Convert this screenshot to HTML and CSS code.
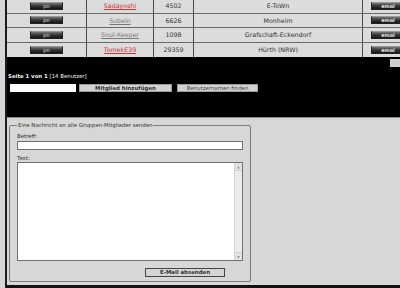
FILE: index.html
```html
<!DOCTYPE html>
<html lang="de">
<head>
    <meta charset="UTF-8">
    <title>Gruppen-Mitglieder</title>
    <link rel="stylesheet" href="styles.css">
</head>
<body>
    <div class="page">
        <!-- Mitgliederliste -->
        <table class="members">
            <tr>
                <td class="c-pm"><span class="dark-btn">pn</span></td>
                <td class="c-name"><a class="user user-red" href="#">Sadayoshi</a></td>
                <td class="c-posts">4502</td>
                <td class="c-city">E-ToWn</td>
                <td class="c-mail"><span class="dark-btn mail-btn">emal</span></td>
            </tr>
            <tr>
                <td class="c-pm"><span class="dark-btn">pn</span></td>
                <td class="c-name"><a class="user" href="#">Sobeln</a></td>
                <td class="c-posts">6626</td>
                <td class="c-city">Monheim</td>
                <td class="c-mail"><span class="dark-btn mail-btn">emal</span></td>
            </tr>
            <tr>
                <td class="c-pm"><span class="dark-btn">pn</span></td>
                <td class="c-name"><a class="user" href="#">Soul-Keeper</a></td>
                <td class="c-posts">1098</td>
                <td class="c-city">Grafschaft-Eckendorf</td>
                <td class="c-mail"><span class="dark-btn mail-btn">emal</span></td>
            </tr>
            <tr>
                <td class="c-pm"><span class="dark-btn">pn</span></td>
                <td class="c-name"><a class="user user-red" href="#">TomekE39</a></td>
                <td class="c-posts">29359</td>
                <td class="c-city">Hürth (NRW)</td>
                <td class="c-mail"><span class="dark-btn mail-btn">emal</span></td>
            </tr>
        </table>

        <!-- Seitenleiste / Mitglied hinzufügen -->
        <div class="pager">
            <div class="pager-top"><span class="jump-box"></span></div>
            <p class="count"><b>Seite 1 von 1</b> [14 Benutzer]</p>
            <div class="add-form">
                <input type="text" class="add-input">
                <button class="light-btn strong">Mitglied hinzufügen</button>
                <button class="light-btn find">Benutzernamen finden</button>
            </div>
        </div>

        <!-- Rundmail -->
        <div class="mail-area">
            <fieldset class="mail">
                <legend>Eine Nachricht an alle Gruppen-Mitglieder senden</legend>
                <label class="field-label">Betreff:</label>
                <input type="text" class="subject">
                <label class="field-label text-label">Text:</label>
                <div class="message-box">
                    <textarea class="message"></textarea>
                    <div class="scrollbar">
                        <span class="scroll-arrow">▲</span>
                        <span class="scroll-arrow">▼</span>
                    </div>
                </div>
                <div class="submit-row">
                    <button class="send-btn">E-Mail absenden</button>
                </div>
            </fieldset>
        </div>
        <div class="bottom-bar"></div>
    </div>
</body>
</html>
```

FILE: styles.css
```css
* {
    box-sizing: border-box;
    margin: 0;
    padding: 0;
}

html, body {
    overflow: hidden;
}

body {
    background: #d5d5d5;
    font-family: 'DejaVu Sans', Verdana, sans-serif;
    color: #333;
    height: 288px;
}

.page {
    margin-left: 5px;
    width: 408px;
    border-left: 2px solid #1c1c1c;
    height: 100%;
    display: flex;
    flex-direction: column;
}

/* Mitgliederliste */
.members {
    margin-top: -1px;
    width: 406px;
    table-layout: fixed;
    border-collapse: separate;
    border-spacing: 0;
    background: #dcdcdc;
    font-size: 6.3px;
}

.members td {
    height: 14.5px;
    border-bottom: 1px solid #6a6a6a;
    border-right: 1px solid #4a4a4a;
    text-align: center;
    vertical-align: middle;
    color: #333;
}

.members tr:last-child td {
    border-bottom: none;
}

.c-pm { width: 80px; }
.c-name { width: 67px; }
.c-posts { width: 40px; }
.c-city { width: 169px; }
.members td.c-mail {
    width: 50px;
    border-right: none;
}

.dark-btn {
    display: inline-block;
    width: 33px;
    height: 8px;
    line-height: 7px;
    font-size: 5px;
    color: #e0e0e0;
    background: linear-gradient(#777, #3a3a3a 45%, #151515);
    border: 1px solid #222;
    border-top-color: #999;
    vertical-align: middle;
}

.mail-btn {
    width: 34px;
    font-weight: bold;
}

.user {
    color: #7a7a7a;
    text-decoration: underline;
}

.user-red {
    color: #cc3333;
}

/* Seitenleiste */
.pager {
    background: #000;
    height: 60px;
    padding-top: 2px;
    flex: none;
}

.pager-top {
    display: flex;
    justify-content: flex-end;
    height: 8px;
}

.jump-box {
    width: 10px;
    height: 8px;
    margin-right: 13px;
    background: #cfcfcf;
}

.count {
    margin-top: 5px;
    padding-left: 1px;
    font-size: 5.4px;
    line-height: 8px;
    color: #eee;
}

.add-form {
    display: flex;
    gap: 3px;
    margin-top: 4px;
    padding-left: 3px;
}

.add-input {
    width: 66px;
    height: 8px;
    border: none;
    background: #fff;
}

.light-btn {
    height: 8px;
    font-family: inherit;
    font-size: 5.4px;
    line-height: 6px;
    color: #333;
    background: #d2d2d2;
    border: 1px solid #9a9a9a;
}

.strong {
    width: 93px;
    font-weight: bold;
}

.find {
    width: 81px;
    margin-left: 2px;
    color: #444;
}

/* Rundmail */
.mail-area {
    border-top: 1px solid #8a8a8a;
    background: #d7d7d7;
    padding: 4px 0 0 2px;
    flex: 1;
}

.mail {
    width: 242px;
    border: 1px solid #7a7a7a;
    border-radius: 2px;
    padding: 0 7px 4px;
}

.mail legend {
    font-size: 5.4px;
    line-height: 7px;
    padding: 0 1px;
    color: #333;
}

.field-label {
    display: block;
    font-size: 5.4px;
    line-height: 7px;
    padding-top: 4px;
    color: #333;
}

.text-label {
    padding-top: 5px;
}

.subject {
    display: block;
    width: 226px;
    height: 9px;
    margin-top: 1px;
    background: #fff;
    border: 1px solid #707070;
}

.message-box {
    display: flex;
    width: 226px;
    height: 99px;
    background: #fff;
    border: 1px solid #707070;
}

.message {
    flex: 1;
    border: none;
    resize: none;
    background: #fff;
}

.scrollbar {
    width: 8px;
    display: flex;
    flex-direction: column;
    justify-content: space-between;
    background: #ececec;
    border-left: 1px solid #d4d4d4;
}

.scroll-arrow {
    height: 8px;
    font-size: 3px;
    line-height: 8px;
    text-align: center;
    color: #888;
    background: #e2e2e2;
    border-bottom: 1px solid #d0d0d0;
}

.scroll-arrow:last-child {
    border-bottom: none;
    border-top: 1px solid #d0d0d0;
}

.submit-row {
    padding: 7px 0 0 128px;
}

.send-btn {
    display: block;
    width: 80px;
    height: 9px;
    font-family: inherit;
    font-size: 5.4px;
    font-weight: bold;
    line-height: 7px;
    color: #333;
    background: #d4d4d4;
    border: 1px solid #444;
}

.bottom-bar {
    height: 3px;
    background: #111;
    flex: none;
}
```
